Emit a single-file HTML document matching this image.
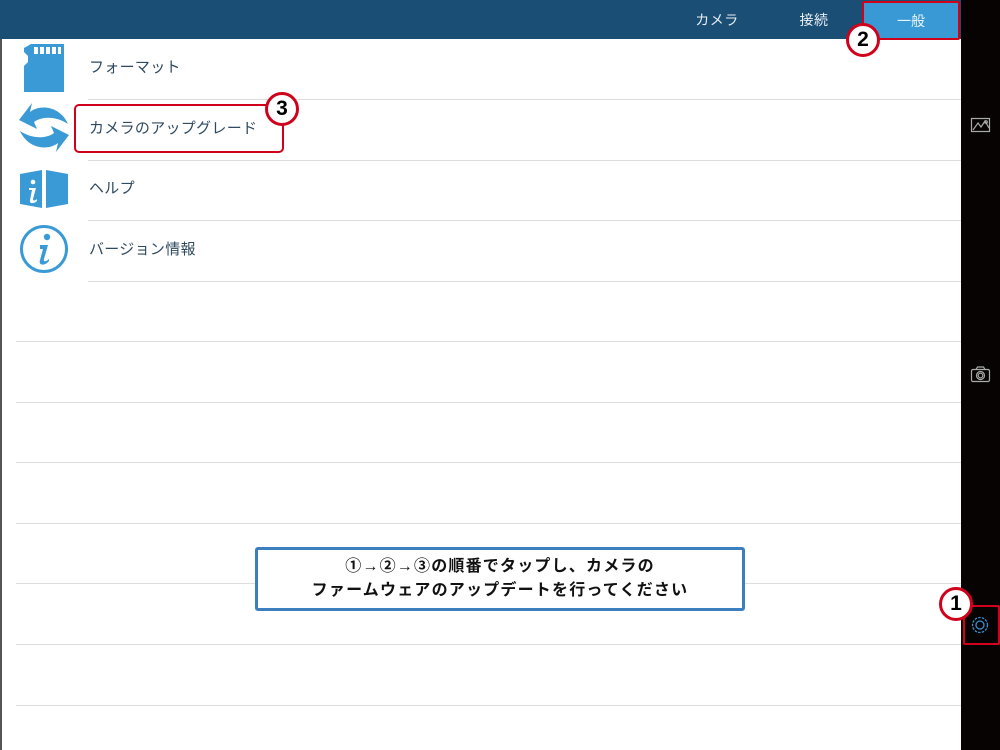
<!DOCTYPE html>
<html><head><meta charset="utf-8"><style>
body{margin:0;width:1000px;height:750px;position:relative;background:#fff;overflow:hidden;font-family:"Liberation Sans","Noto Sans CJK JP",sans-serif}
.a{position:absolute}
.hd{left:0;top:0;width:961px;height:39px;background:#1a4e74}
.side{left:961px;top:0;width:39px;height:750px;background:#070303}
.lb{left:0;top:39px;width:2px;height:711px;background:#555}
.tab{top:1px;height:39px;line-height:39px;color:#e8eef3;font-size:14px;text-align:center;letter-spacing:0.5px}
.ln{height:1px;background:#ddd;right:39px}
.it{left:89px;font-size:15px;color:#2f4a60;letter-spacing:0.3px}
.circ{width:28px;height:28px;border:3px solid #d0021b;border-radius:50%;background:#fff;font:bold 21px/28px "Liberation Sans",sans-serif;text-align:center;color:#000}
</style></head><body>
<div class="a hd"></div>
<div class="a side"></div>
<div class="a lb"></div>
<div class="a tab" style="left:680px;width:74px">カメラ</div>
<div class="a tab" style="left:777px;width:74px">接続</div>
<div class="a" style="left:862px;top:1px;width:94px;height:35px;background:#3899d5;border:2px solid #d0021b;border-radius:2px;color:#e8f2fa;font-size:14px;line-height:37px;text-align:center">一般</div>
<div class="a circ" style="left:846px;top:23px">2</div>

<div class="a ln" style="left:88px;top:99px"></div>
<div class="a ln" style="left:88px;top:160px"></div>
<div class="a ln" style="left:88px;top:220px"></div>
<div class="a ln" style="left:88px;top:281px"></div>
<div class="a ln" style="left:16px;top:341px"></div>
<div class="a ln" style="left:16px;top:402px"></div>
<div class="a ln" style="left:16px;top:462px"></div>
<div class="a ln" style="left:16px;top:523px"></div>
<div class="a ln" style="left:16px;top:583px"></div>
<div class="a ln" style="left:16px;top:644px"></div>
<div class="a ln" style="left:16px;top:705px"></div>

<div class="a it" style="top:56px">フォーマット</div>
<div class="a it" style="top:117px">カメラのアップグレード</div>
<div class="a it" style="top:177px">ヘルプ</div>
<div class="a it" style="top:238px">バージョン情報</div>
<div class="a" style="left:74px;top:104px;width:206px;height:45px;border:2px solid #d0021b;border-radius:5px"></div>
<div class="a circ" style="left:265px;top:92px">3</div>

<svg class="a" style="left:0;top:0" width="961" height="300">
<g fill="#3a9ad6">
<path d="M31 44H64V92H24V66L28 62V56L24 52V48Z"/>
<g fill="#fff"><rect x="34" y="47" width="4" height="7"/><rect x="40" y="47" width="4" height="7"/><rect x="46" y="47" width="4" height="7"/><rect x="52" y="47" width="4" height="7"/><rect x="58" y="47" width="3" height="7"/></g>
<path d="M68 124C60 106 40 104 30 112L32 103L19 120L37 129L34 122C42 116 56 116 68 124Z"/>
<path d="M20 131C28 149 48 151 58 143L56 152L69 135L51 126L54 133C46 139 32 139 20 131Z"/>
<path d="M20 174L42 170V208L20 204Z"/><path d="M46 170L68 174V204L46 208Z"/>
<circle cx="44" cy="249" r="22.5" fill="none" stroke="#3a9ad6" stroke-width="3"/>
<circle cx="47" cy="237" r="3.2"/>
<path d="M40 245H48L44 259C43 262 46 262 49 259L49 261C45 266 38 266 40 260L43 249H40Z"/>
</g>
<g fill="#fff"><circle cx="33" cy="182" r="2.3"/><path d="M29 188H36L33 199C33 201 35 201 37 199V201C34 204 29 204 30 200L32 190H29Z"/></g>
</svg>

<svg class="a" style="left:961px;top:0" width="39" height="750">
<g fill="none" stroke="#aaa" stroke-width="1.2">
<rect x="10.5" y="118.5" width="18" height="13"/><path d="M12 130L17 123L20 127L24 121L28 128"/><circle cx="25" cy="122" r="1.3"/>
<rect x="10.5" y="369.5" width="18" height="12" rx="1.5"/><path d="M15 369.5L16.5 367H22.5L24 369.5"/><circle cx="19.5" cy="375.5" r="4"/><circle cx="19.5" cy="375.5" r="2.3"/>
</g>
<g fill="none" stroke="#3a8fd0" stroke-width="1.3"><circle cx="19" cy="625" r="4"/><circle cx="19" cy="625" r="7.5" stroke-dasharray="2.5 1.2"/></g>
</svg>
<div class="a" style="left:963px;top:605px;width:33px;height:36px;border:2px solid #d0021b;border-radius:2px"></div>
<div class="a circ" style="left:939px;top:587px">1</div>

<div class="a" style="left:255px;top:547px;width:490px;height:64px;box-sizing:border-box;border:3px solid #3b7fc1;border-radius:3px;background:#fff;text-align:center;font-weight:bold;font-size:16px;line-height:24px;padding-top:5px;color:#111;letter-spacing:1.2px">①→②→③の順番でタップし、カメラの<br>ファームウェアのアップデートを行ってください</div>
</body></html>
